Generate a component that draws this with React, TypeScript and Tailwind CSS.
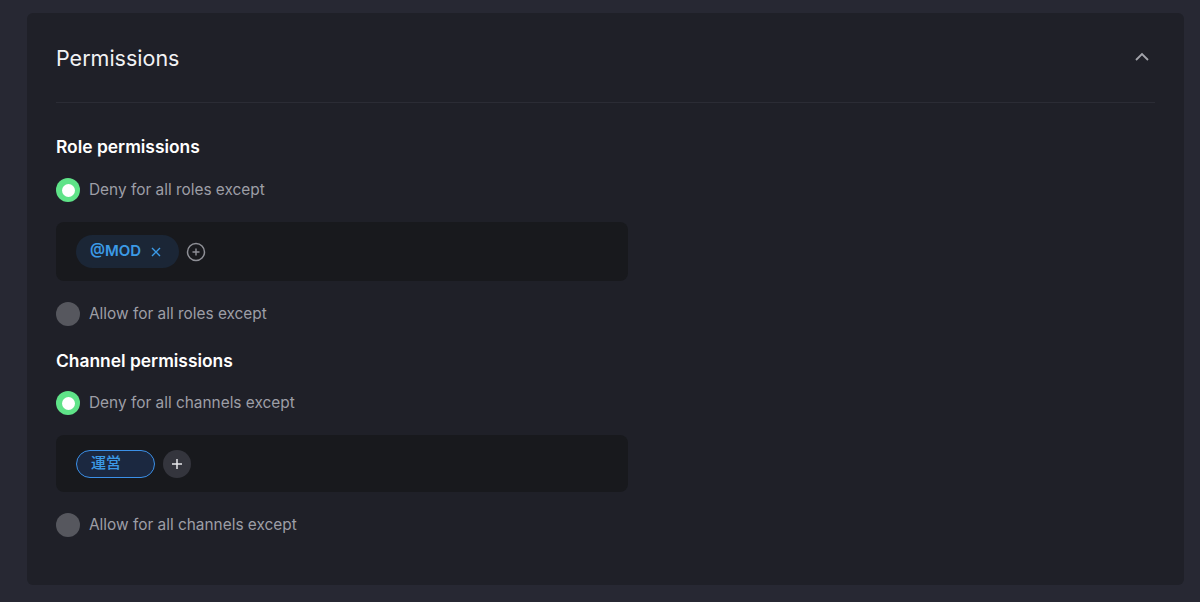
import React from "react";

function Radio({ checked, label }: { checked: boolean; label: string }) {
  return (
    <div className="flex items-center gap-[9px] h-6">
      {checked ? (
        <span className="w-6 h-6 rounded-full bg-[#5fe388] flex items-center justify-center">
          <span className="w-[13px] h-[13px] rounded-full bg-white" />
        </span>
      ) : (
        <span className="w-6 h-6 rounded-full bg-[#56575e]" />
      )}
      <span className="text-[15.4px] text-[#9d9ea6]">{label}</span>
    </div>
  );
}

export default function App() {
  return (
    <div
      className="w-[1200px] h-[602px] bg-[#272833] pt-[13px] pl-[27px] pr-[16px]"
      style={{ fontFamily: "Inter, 'Noto Sans CJK JP', sans-serif" }}
    >
      <div className="w-[1157px] h-[572px] bg-[#1f2028] rounded-[6px] px-[29px]">
        <div className="flex items-center justify-between h-[90px] border-b border-[#2b2c35]">
          <h1 className="text-[21.5px] text-[#f2f2f4] pt-[1px]">Permissions</h1>
          <svg width="16" height="10" viewBox="0 0 16 10" className="mr-[5px] mb-[2px]">
            <path d="M2 8 L8 2 L14 8" fill="none" stroke="#a3a4ab" strokeWidth="1.8" />
          </svg>
        </div>

        <div className="pt-[33px]">
          <h2 className="text-[17.4px] font-semibold text-white leading-[22px]">Role permissions</h2>
          <div className="mt-[20px]">
            <Radio checked label="Deny for all roles except" />
          </div>
          <div className="mt-[20px] w-[572px] h-[59px] bg-[#18191d] rounded-[8px] flex items-center pl-[20px] gap-[7px]">
            <span className="h-[33px] pl-[14px] pr-[18px] rounded-full bg-[#1b2636] flex items-center gap-[10px] text-[#3b9ae6] text-[15px] font-semibold">
              @MOD
              <svg width="10" height="10" viewBox="0 0 10 10">
                <path d="M1 1 L9 9 M9 1 L1 9" stroke="#3b9ae6" strokeWidth="1.4" />
              </svg>
            </span>
            <svg width="20" height="20" viewBox="0 0 20 20">
              <circle cx="10" cy="10" r="8.5" fill="none" stroke="#8e8f96" strokeWidth="1.5" />
              <path d="M10 6.5 V13.5 M6.5 10 H13.5" stroke="#8e8f96" strokeWidth="1.4" />
            </svg>
          </div>
          <div className="mt-[21px]">
            <Radio checked={false} label="Allow for all roles except" />
          </div>
        </div>

        <div className="pt-[24px]">
          <h2 className="text-[17.4px] font-semibold text-white leading-[22px]">Channel permissions</h2>
          <div className="mt-[19px]">
            <Radio checked label="Deny for all channels except" />
          </div>
          <div className="mt-[20px] w-[572px] h-[57px] bg-[#18191d] rounded-[8px] flex items-center pl-[20px] gap-[8px]">
            <span className="w-[79px] h-[28px] pl-[14px] rounded-full bg-[#1b2840] border-[1.5px] border-[#3b90e8] flex items-center text-[#3b9ae6] text-[15px] font-medium">
              運営
            </span>
            <span className="w-[28px] h-[28px] rounded-full bg-[#34353d] flex items-center justify-center">
              <svg width="12" height="12" viewBox="0 0 12 12">
                <path d="M6 1 V11 M1 6 H11" stroke="#e6e6ea" strokeWidth="1.5" />
              </svg>
            </span>
          </div>
          <div className="mt-[21px]">
            <Radio checked={false} label="Allow for all channels except" />
          </div>
        </div>
      </div>
    </div>
  );
}
